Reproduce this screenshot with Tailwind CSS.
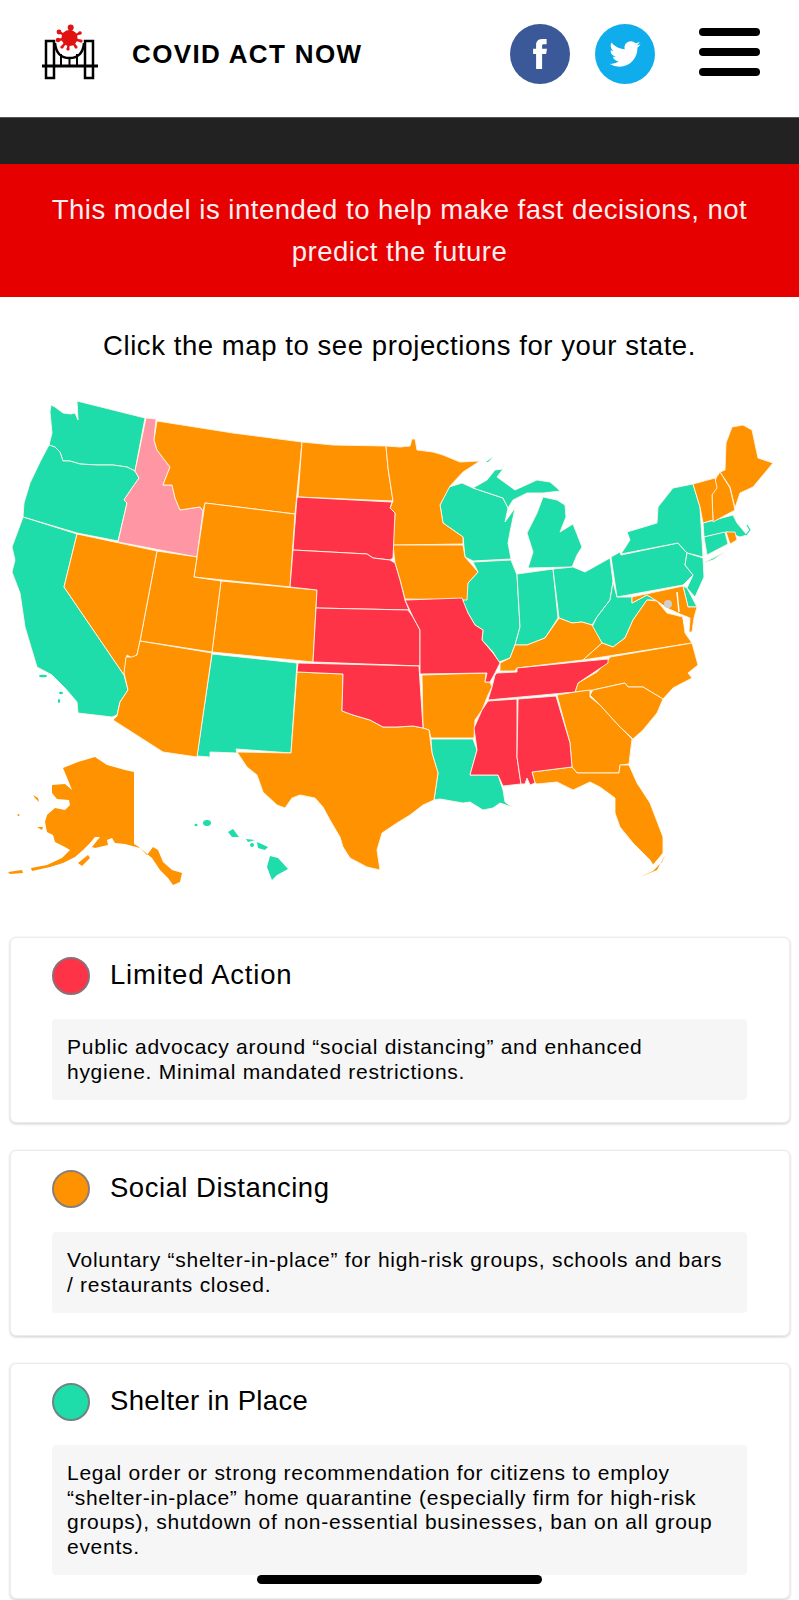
<!DOCTYPE html>
<html lang="en">
<head>
<meta charset="utf-8">
<title>Covid Act Now</title>
<script src="https://cdn.jsdelivr.net/npm/@tailwindcss/browser@4"></script>
</head>
<body class="bg-white">
<div class="relative h-[1600px] w-[799px] overflow-hidden bg-white font-['Liberation_Sans',Arial,sans-serif] text-black">
  <header class="flex h-[118px] items-start border-b border-[#555] shadow-sm">
    <svg class="ml-[40px] mt-[24px] h-[60px] w-[60px] shrink-0" viewBox="0 0 60 60" fill="none">
      <path d="M15 19 C16 30 22 34 29.5 34 C37 34 43 30 44 19" stroke="#000" stroke-width="2.5"/>
      <path d="M6 17 H14 V54 H6 Z M45 17 H53 V54 H45 Z" stroke="#000" stroke-width="2.5"/>
      <path d="M2 42 H58" stroke="#000" stroke-width="3"/>
      <path d="M21 30 V42 M29.5 34 V42 M37 30 V42" stroke="#000" stroke-width="2"/>
      <g stroke="#e01212" stroke-width="2.4" stroke-linecap="round">
        <path d="M29.500 14 L30.500 4 M29.500 14 L19 8 M29.500 14 L40 9 M29.500 14 L18 16 M29.500 14 L41 17 M29.500 14 L22 23 M29.500 14 L36 23 M29.500 14 L28 25"/>
      </g>
      <g fill="#e01212">
        <circle cx="29.500" cy="14" r="8"/><circle cx="30.700" cy="3.500" r="3"/><circle cx="19" cy="8" r="2.400"/><circle cx="40" cy="9" r="1.800"/><circle cx="18" cy="16" r="2.200"/><circle cx="41" cy="17" r="1.600"/><circle cx="22" cy="23" r="1.600"/><circle cx="36" cy="23" r="1.500"/><circle cx="28" cy="25" r="1.600"/>
      </g>
    </svg>
    <div class="ml-[32px] mt-[38px] text-[26px] leading-[32px] font-bold tracking-[1.35px]">COVID ACT NOW</div>
    <a class="ml-auto mt-[24px] flex h-[60px] w-[60px] items-center justify-center rounded-full bg-[#3b5998]">
      <svg class="h-[30px] w-[16px]" viewBox="8 2 9.2 20" fill="#fff"><path d="M14 8.5V6.5c0-.8.5-1 1-1h2V2h-3c-3 0-4 2-4 4v2.5H8V12h2v10h4V12h2.7l.5-3.5z"/></svg>
    </a>
    <a class="ml-[25px] mt-[24px] flex h-[60px] w-[60px] items-center justify-center rounded-full bg-[#10aded]">
      <svg class="h-[26px] w-[32px]" viewBox="0 2 24 20" fill="#fff"><path d="M23.953 4.57a10 10 0 01-2.825.775 4.958 4.958 0 002.163-2.723c-.951.555-2.005.959-3.127 1.184a4.92 4.92 0 00-8.384 4.482C7.69 8.095 4.067 6.13 1.64 3.162a4.822 4.822 0 00-.666 2.475c0 1.71.87 3.213 2.188 4.096a4.904 4.904 0 01-2.228-.616v.06a4.923 4.923 0 003.946 4.827 4.996 4.996 0 01-2.212.085 4.936 4.936 0 004.604 3.417 9.867 9.867 0 01-6.102 2.105c-.39 0-.779-.023-1.17-.067a13.995 13.995 0 007.557 2.209c9.053 0 13.998-7.496 13.998-13.985 0-.21 0-.42-.015-.63A9.935 9.935 0 0024 4.59z"/></svg>
    </a>
    <div class="ml-[44px] mr-[39px] mt-[28px] flex w-[61px] flex-col gap-[12px]">
      <span class="block h-[8px] rounded-[4px] bg-black"></span>
      <span class="block h-[8px] rounded-[4px] bg-black"></span>
      <span class="block h-[8px] rounded-[4px] bg-black"></span>
    </div>
  </header>
  <div class="h-[46px] bg-[#222222]"></div>
  <div class="flex h-[133px] items-center justify-center bg-[#e60000] px-[40px] pt-[1px] text-center text-[27.500px] leading-[42px] tracking-[0.5px] text-[#fdf0f0]">
    <p>This model is intended to help make fast decisions, not predict the future</p>
  </div>
  <p class="mt-[32px] text-center text-[27.500px] leading-[34px] tracking-[0.57px]">Click the map to see projections for your state.</p>
  <svg class="mt-[27px] block h-[510px] w-[799px]" viewBox="0 390 799 510" stroke="#fff6e8" stroke-width="0.9" stroke-linejoin="round">
    <g fill="#1fdcab">
      <polygon points="51,405 55,407 63,413 71,414 75,413 78,420 77,401 145,418 135,471 127,467 113,465 97,465 80,464 70,461 63,461 60,452 55,447 49,445 52,433 50,412"/>
      <polygon points="49,445 55,447 60,452 63,461 70,461 80,464 97,465 113,465 127,467 135,471 139,478 132,488 124,500 127,503 118,541 77,533 23,517 24,503 30,483 40,462"/>
      <polygon points="23,517 77,534 64,587 124,675 128,690 120,702 117,715 112,717 78,713 77,702 65,688 52,675 37,667 25,627 20,593 12,572 15,560 12,547 22,520"/>
      <ellipse cx="43" cy="676" rx="4" ry="1.300" stroke="none"/><ellipse cx="61" cy="693" rx="2" ry="1.300" stroke="none"/><ellipse cx="59" cy="701" rx="1.200" ry="2" stroke="none"/>
      <polygon points="212,654 297,663 291,753 236,749 237,753 210,752 210,757 197,756"/>
      <polygon points="431,739 473,739 477,750 470,775 498,775 503,790 505,802 512,807 500,803 493,808 483,810 470,802 463,803 440,799 434,800 438,773 432,753"/>
      <polygon points="449,487 462,483 473,488 503,498 508,508 505,522 515,508 510,532 508,543 511,559 473,561 465,557 463,537 443,523 440,505"/>
      <polygon points="473,488 487,480 495,470 503,469 497,477 515,490 537,480 550,482 557,488 560,491 543,493 527,493 513,500 508,508 503,498"/>
      <polygon points="486,462 493,457 488,462" stroke="none"/>
      <polygon points="528,568 533,552 527,533 537,513 543,497 557,500 565,505 566,517 560,532 573,524 582,547 577,555 572,567"/>
      <polygon points="473,562 511,560 517,575 520,627 515,645 510,658 499,662 493,652 482,640 483,630 475,625 468,613 463,603 468,583 478,572"/>
      <polygon points="517,574 553,569 558,618 545,638 527,645 515,645 520,627"/>
      <polygon points="553,569 573,567 585,572 610,558 613,582 610,600 597,617 592,625 582,622 572,623 559,618"/>
      <polygon points="613,582 617,597 632,597 632,603 647,595 657,600 647,600 633,620 625,638 613,647 602,643 592,627 597,617 610,600"/>
      <polygon points="611,557 620,552 621,555 678,543 687,553 685,565 693,575 683,585 617,597"/>
      <polygon points="621,554 630,540 627,532 657,523 658,507 673,488 693,484 700,507 703,557 687,553 678,543"/>
      <polygon points="703,563 725,552 713,560"/>
      <polygon points="687,553 703,558 704,577 695,597 687,588 693,575 685,565"/>
      <polygon points="683,586 687,588 697,607 688,607"/>
      <polygon points="703,523 733,515 737,523 747,535 740,537 727,532 704,537"/>
      <polygon points="704,537 725,532 728,544 707,555"/>
      <path d="M747 525 L750 530 L746 535" fill="none" stroke="#1fdcab" stroke-width="1.200"/>
      <ellipse cx="207" cy="823" rx="4" ry="3" stroke="none"/><ellipse cx="196" cy="825" rx="1.500" ry="1.200" stroke="none"/>
      <polygon points="228,832 233,829 239,837 232,837" stroke="none"/><polygon points="246,839 255,840 248,842" stroke="none"/><circle cx="252" cy="845" r="2" stroke="none"/>
      <polygon points="257,842 268,847 265,850 258,848" stroke="none"/><polygon points="270,856 278,858 288,869 277,875 272,880 267,867" stroke="none"/>
    </g>
    <polygon fill="#ff96a4" points="146,418 156,419 154,440 157,450 163,458 170,467 163,485 172,485 175,498 180,510 193,508 200,507 203,511 197,557 118,542 127,503 124,500 132,488 139,478 135,471"/>
    <g fill="#ff9200">
      <polygon points="157,421 233,433 302,442 295,514 205,503 203,511 200,507 193,508 180,510 175,498 172,485 163,485 170,467 163,458 157,450 154,440"/>
      <polygon points="302,442 333,445 386,446 388,468 393,501 298,497"/>
      <polygon points="205,503 295,514 290,587 194,577"/>
      <polygon points="221,581 317,590 313,662 212,652"/>
      <polygon points="157,551 197,557 194,577 221,581 212,652 140,641"/>
      <polygon points="77,534 157,551 140,641 137,655 132,658 127,655 124,675 64,587"/>
      <polygon points="140,641 212,653 197,757 163,752 113,720 117,716 120,702 128,690 124,673 126,657 132,657 137,655"/>
      <polygon points="422,675 486,673 485,682 490,682 492,687 488,695 482,710 475,720 474,738 431,738 429,730 423,728"/>
      <polygon points="297,672 343,674 342,711 353,715 370,720 383,727 397,727 413,726 423,728 429,730 432,753 438,773 434,800 423,805 410,815 397,823 382,833 377,850 380,870 367,867 350,858 343,847 340,837 330,820 323,807 315,798 300,795 292,798 285,808 277,805 263,792 257,775 247,767 237,752 291,753"/>
      <polygon points="386,446 400,447 410,446 412,439 415,439 417,450 433,452 443,455 460,462 480,461 463,472 450,486 440,505 443,523 463,537 463,544 400,545 393,545 395,513 390,508 393,501 388,468"/>
      <polygon points="393,545 463,545 465,557 478,572 468,583 467,600 405,599 400,580 395,563"/>
      <polygon points="559,618 572,623 582,622 592,625 602,643 583,660 517,668 515,671 500,671 500,663 510,658 515,645 527,645 545,638"/>
      <polygon points="633,620 647,600 657,601 667,613 683,617 685,633 692,643 583,660 602,643 613,647 625,638"/>
      <polygon points="632,597 683,586 688,607 697,607 694,618 692,632 689,632 690,618 680,614 667,608 657,601 647,595 632,603"/>
      <polygon points="692,643 698,665 688,673 692,678 673,688 663,699 643,687 628,687 625,683 593,690 575,692 578,683 597,672 608,660 610,657"/>
      <polygon points="557,695 575,692 590,690 590,697 600,705 620,727 632,739 629,764 620,765 619,773 577,773 572,767 570,743"/>
      <polygon points="590,695 593,690 625,683 628,687 643,687 663,699 657,713 643,730 633,739 620,727 600,705"/>
      <polygon points="532,772 572,767 577,773 619,773 620,765 629,765 637,783 650,803 663,837 663,853 653,865 650,860 633,843 620,827 615,813 615,798 600,787 590,782 573,790 557,782 537,784 535,783"/>
      <polygon points="665,855 657,870 640,877 653,871 662,862" stroke="none"/>
      <polygon points="720,472 725,470 726,443 732,427 743,425 752,430 758,458 773,463 753,487 740,493 735,508 730,487"/>
      <polygon points="716,478 720,472 730,488 735,510 713,522 712,495"/>
      <polygon points="693,484 715,478 717,488 712,495 713,520 703,523 700,507"/>
      <polygon points="726,532 735,532 737,540 730,544"/>
      <g stroke="none">
        <polygon points="63,768 78,762 95,757 107,765 125,770 134,772 134,844 139,847 147,855 153,847 158,850 163,862 172,870 182,873 180,882 173,885 168,878 160,870 152,858 140,848 125,844 115,843 112,838 107,840 108,845 95,848 92,847 100,837 95,837 90,843 83,850 75,857 63,863 50,867 32,871 31,868 47,865 62,858 70,850 65,847 55,842 53,835 47,832 45,822 47,815 55,808 65,810 70,805 69,800 57,799 52,793 52,785 65,784 72,790 68,780"/>
        <polygon points="33,795 38,798 39,802 35,798"/><circle cx="18.500" cy="815" r="1"/><polygon points="37,827 43,827 42,830"/><polygon points="78,863 88,855 90,858 82,866"/><polygon points="8,872 22,870 23,873 10,874"/>
      </g>
    </g>
    <g fill="#ff3348">
      <polygon points="297,497 392,502 390,508 395,513 393,558 390,560 373,558 367,554 293,550"/>
      <polygon points="293,550 367,554 373,558 390,560 395,563 400,580 405,600 409,610 316,608 317,590 290,587"/>
      <polygon points="316,608 408,610 413,617 420,630 420,666 313,662"/>
      <polygon points="298,663 419,666 423,728 413,726 397,727 383,727 370,720 353,715 342,711 343,674 297,672"/>
      <polygon points="405,600 462,598 468,613 475,625 483,630 482,640 493,653 500,663 495,673 490,682 485,682 487,673 420,674 420,630 413,617"/>
      <polygon points="497,673 517,672 517,668 587,661 608,659 608,663 593,673 578,683 575,692 488,700 492,687 495,675"/>
      <polygon points="488,701 517,699 517,757 521,784 503,786 498,775 470,775 477,750 474,728 482,710"/>
      <polygon points="518,699 556,696 570,743 572,767 532,772 535,783 530,785 527,778 525,784 521,784 517,757"/>
    </g>
    <circle cx="668" cy="604" r="4" fill="#cfcfcf" stroke="none"/>
    <path d="M677 592 L679 612 M683 617 L687 634" stroke="#fff" stroke-width="1.500" fill="none"/>
  </svg>
  <div class="absolute left-[10px] right-[9px] top-[937px] flex flex-col gap-[27px]">
    <section class="h-[186px] rounded-[6px] border border-[#ececec] bg-white pl-[41px] pr-[42px] pt-[18px] shadow-[0_1px_3px_rgba(0,0,0,0.2)]">
      <div class="flex items-center gap-[20px]">
        <span class="h-[38px] w-[38px] rounded-full border-2 border-[#8a7078] bg-[#ff3348]"></span>
        <h2 class="pb-[2px] text-[27.500px] font-normal leading-[38px] tracking-[0.8px]">Limited Action</h2>
      </div>
      <p class="mt-[23px] rounded-[4px] bg-[#f6f6f6] py-[16px] pl-[15px] pr-[19px] text-[21px] leading-[24.500px] tracking-[0.72px]">Public advocacy around “social distancing” and enhanced hygiene. Minimal mandated restrictions.</p>
    </section>
    <section class="h-[186px] rounded-[6px] border border-[#ececec] bg-white pl-[41px] pr-[42px] pt-[18px] shadow-[0_1px_3px_rgba(0,0,0,0.2)]">
      <div class="flex items-center gap-[20px]">
        <span class="h-[38px] w-[38px] rounded-full border-2 border-[#8a8078] bg-[#ff9200]"></span>
        <h2 class="pb-[2px] text-[27.500px] font-normal leading-[38px] tracking-[0.5px]">Social Distancing</h2>
      </div>
      <p class="mt-[23px] rounded-[4px] bg-[#f6f6f6] py-[16px] pl-[15px] pr-[19px] text-[21px] leading-[24.500px] tracking-[0.72px]">Voluntary “shelter-in-place” for high-risk groups, schools and bars / restaurants closed.</p>
    </section>
    <section class="h-[236px] rounded-[6px] border border-[#ececec] bg-white pl-[41px] pr-[42px] pt-[18px] shadow-[0_1px_3px_rgba(0,0,0,0.2)]">
      <div class="flex items-center gap-[20px]">
        <span class="h-[38px] w-[38px] rounded-full border-2 border-[#6f8580] bg-[#1fdcab]"></span>
        <h2 class="pb-[2px] text-[27.500px] font-normal leading-[38px] tracking-[0.35px]">Shelter in Place</h2>
      </div>
      <p class="mt-[23px] rounded-[4px] bg-[#f6f6f6] py-[16px] pl-[15px] pr-[19px] text-[21px] leading-[24.500px] tracking-[0.72px]">Legal order or strong recommendation for citizens to employ “shelter-in-place” home quarantine (especially firm for high-risk groups), shutdown of non-essential businesses, ban on all group events.</p>
    </section>
  </div>
  <div class="absolute bottom-[16px] left-[257px] h-[9px] w-[285px] rounded-full bg-black"></div>
</div>
</body>
</html>
